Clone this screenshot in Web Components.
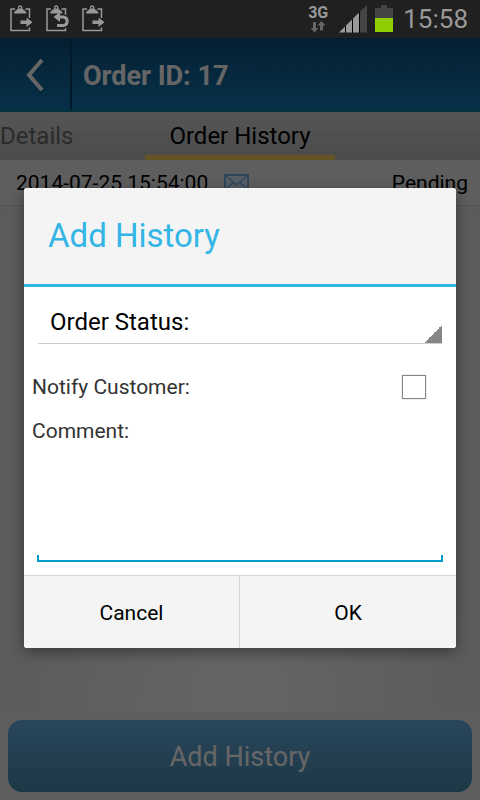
<!DOCTYPE html>
<html lang="en">
<head>
<meta charset="utf-8">
<meta name="viewport" content="width=device-width, initial-scale=1">
<title>Order ID: 17</title>
<style>
  body {
    margin: 0;
    font-family: Roboto, "Liberation Sans", sans-serif;
    color: #000;
    background: #000;
  }
</style>
</head>
<body>
<order-app>
  <status-bar slot="status" time="15:58"></status-bar>
  <action-bar slot="page">Order ID: 17</action-bar>
  <tab-strip slot="page"></tab-strip>
  <history-row slot="page" status="Pending">2014-07-25 15:54:00</history-row>
  <page-footer slot="footer">Add History</page-footer>
  <history-dialog slot="dialog">Add History</history-dialog>
</order-app>

<script>
class BaseElement extends HTMLElement {
  connectedCallback() {
    if (this.shadowRoot) return;
    this.attachShadow({ mode: 'open' });
    this.shadowRoot.innerHTML = this.template();
  }
}

class OrderApp extends BaseElement {
  template() {
    return `
      <style>
        :host {
          display: flex;
          flex-direction: column;
          min-height: 100vh;
        }
        .screen {
          position: relative;
          flex: 1;
          display: flex;
          flex-direction: column;
          background: radial-gradient(ellipse at 50% 90%, #fdfdfd, #e8e8e8 60%, #e2e2e2);
        }
        main { flex: 1; }
        .scrim {
          position: absolute;
          inset: 0;
          display: flex;
          align-items: center;
          padding: 0 24px 2px;
          background: rgba(0, 0, 0, 0.6);
        }
        .scrim ::slotted(*) { flex: 1; }
      </style>
      <slot name="status"></slot>
      <div class="screen">
        <main><slot name="page"></slot></main>
        <slot name="footer"></slot>
        <div class="scrim"><slot name="dialog"></slot></div>
      </div>
    `;
  }
}

class StatusBar extends BaseElement {
  template() {
    // clipboard outline shared by the three notifications
    const board = `
      <path d="M5 4H1V25.500H19.500V22.500M19.500 13V4H15.500" fill="none" stroke="#999" stroke-width="1.500"/>
      <path d="M4 8.500C4 6 6.500 5 8 4V2.500A2.200 2.200 0 0 1 12.400 2.500V4C14 5 16.500 6 16.500 8.500Z" fill="#999"/>
      <circle cx="10.200" cy="2.700" r="1" fill="#202020"/>`;
    const arrow = '<path d="M10.500 15.500H16.500V12.500L22.500 17.200L16.500 22V19H10.500Z" fill="#999"/>';
    const back = `
      <path d="M14 12H17.500A4.500 4.500 0 0 1 17.500 21H11" fill="none" stroke="#202020" stroke-width="5"/>
      <path d="M13 12H17.500A4.300 4.300 0 0 1 17.500 20.500H11" fill="none" stroke="#999" stroke-width="3"/>
      <path d="M7.500 12L14 7V17Z" fill="#999"/>`;
    return `
      <style>
        :host {
          display: flex;
          align-items: center;
          justify-content: space-between;
          height: 38px;
          padding: 0 12px 0 10px;
          background: #202020;
          color: #999;
        }
        .group { display: flex; align-items: center; gap: 12px; }
        .right { gap: 7px; }
        .time { font-size: 26px; line-height: 38px; padding-left: 3px; }
        svg { display: block; }
        .net {
          display: flex;
          flex-direction: column;
          align-items: center;
          margin-right: 3px;
          font-size: 16px;
          line-height: 16px;
          font-weight: 700;
        }
      </style>
      <div class="group">
        <svg width="24" height="28" viewBox="0 0 24 28">${board}${arrow}</svg>
        <svg width="24" height="28" viewBox="0 0 24 28">${board}${back}</svg>
        <svg width="24" height="28" viewBox="0 0 24 28">${board}${arrow}</svg>
      </div>
      <div class="group right">
        <div class="net">
          <span>3G</span>
          <svg width="16" height="12" viewBox="0 0 16 12" fill="#666"><path d="M3 1H6V7H8.500L4.500 11.500L0.500 7H3Z"/><path d="M10 9.500H13V4.500H15.500L11.500 0L7.500 4.500H10Z"/></svg>
        </div>
        <svg width="30" height="28" viewBox="0 0 30 28"><path d="M22 6.500L29 0V27.500H22Z" fill="#444"/><path d="M1 27.500L7 21.500V27.500ZM8 20.500L14 14.500V27.500H8ZM15 13.500L21 7.500V27.500H15Z" fill="#999"/><path d="M7.500 21V28M14.500 14V28M21.500 7V28" stroke="#000"/></svg>
        <svg width="18" height="28" viewBox="0 0 18 28"><path d="M0 3H6V0H12V3H18V13H0Z" fill="#444"/><path d="M0 13H18V27H0Z" fill="#8fce00"/></svg>
        <span class="time">${this.getAttribute('time')}</span>
      </div>
    `;
  }
}

class ActionBar extends BaseElement {
  template() {
    return `
      <style>
        :host {
          display: flex;
          height: 72px;
          border-bottom: 2px solid #0f7d98;
          background:
            repeating-linear-gradient(135deg, rgba(0, 0, 0, 0.06) 0 2px, transparent 2px 6px),
            linear-gradient(#0c4f7e, #147dba);
          color: #fff;
        }
        button {
          display: grid;
          place-items: center;
          width: 72px;
          padding: 2px 0 0;
          border: 0;
          border-right: 2px solid #07406a;
          background: none;
        }
        h1 { margin: 0; padding-left: 11px; font-size: 27px; line-height: 76px; font-weight: 700; }
      </style>
      <button aria-label="Back">
        <svg width="18" height="32" viewBox="0 0 18 32"><path d="M16 1L3 16L16 31" fill="none" stroke="#fff" stroke-width="4"/></svg>
      </button>
      <h1><slot></slot></h1>
    `;
  }
}

class TabStrip extends BaseElement {
  template() {
    return `
      <style>
        :host {
          display: grid;
          grid-template-columns: 1fr auto 1fr;
          height: 48px;
          background: linear-gradient(#d6d6d6, #bababa);
          font-size: 24px;
          line-height: 48px;
        }
        a { color: #6c6c6c; text-decoration: none; }
        a.active {
          box-sizing: border-box;
          height: 48px;
          padding: 0 24px;
          border-bottom: 5px solid #ffd25a;
          color: #000;
        }
      </style>
      <a href="#details">Details</a>
      <a href="#history" class="active">Order History</a>
    `;
  }
}

class HistoryRow extends BaseElement {
  template() {
    return `
      <style>
        :host {
          display: flex;
          align-items: center;
          gap: 16px;
          height: 45px;
          padding: 0 12px 0 16px;
          border-bottom: 1px solid #cfcfcf;
          background: #ebebeb;
          font-size: 21px;
          line-height: 48px;
        }
        .status { margin-left: auto; }
      </style>
      <span><slot></slot></span>
      <svg width="25" height="18" viewBox="0 0 25 18" aria-hidden="true"><path d="M1 1H24V17H1Z" fill="#dcebff" stroke="#78aee0" stroke-width="2"/><path d="M2 2L12.500 11L23 2M2 16L9 8M23 16L16 8" fill="none" stroke="#78aee0" stroke-width="1.500"/></svg>
      <span class="status">${this.getAttribute('status')}</span>
    `;
  }
}

class PageFooter extends BaseElement {
  template() {
    return `
      <style>
        :host { display: block; padding: 8px; background: #ebebeb; }
        button {
          display: block;
          width: 100%;
          height: 72px;
          padding: 2px 0 0;
          border: 0;
          border-radius: 14px;
          background: linear-gradient(#69b0e4, #468caf);
          color: #fff;
          font: inherit;
          font-size: 27px;
        }
      </style>
      <button><slot></slot></button>
    `;
  }
}

class HistoryDialog extends BaseElement {
  template() {
    return `
      <style>
        :host {
          display: block;
          overflow: hidden;
          border-radius: 3px;
          background: #fff;
          box-shadow: 0 4px 14px rgba(0, 0, 0, 0.4);
        }
        h2 {
          margin: 0;
          padding: 0 24px;
          border-bottom: 3px solid #33b5e5;
          background: #f4f4f4;
          color: #33b5e5;
          font-size: 33px;
          line-height: 96px;
          font-weight: 400;
        }
        form { padding: 14px 8px 13px; font-size: 21px; color: #333; }
        select, textarea, button { display: block; box-sizing: border-box; font: inherit; border: 0; }
        select {
          appearance: none;
          width: calc(100% - 12px);
          height: 43px;
          margin: 0 6px;
          padding: 0 30px 0 12px;
          border-bottom: 1px solid #ccc;
          border-radius: 0;
          background: linear-gradient(135deg, transparent 50%, #868686 50%) right bottom / 18px 18px no-repeat;
          color: #000;
          font-size: 24px;
        }
        .notify {
          display: flex;
          align-items: center;
          justify-content: space-between;
          height: 73px;
          padding: 13px 22px 0 0;
          box-sizing: border-box;
        }
        input {
          appearance: none;
          box-sizing: border-box;
          width: 24px;
          height: 24px;
          margin: 0;
          border: 1px solid #868686;
          box-shadow: 0 0 1px #999;
        }
        .comment { display: block; line-height: 28px; }
        textarea {
          width: calc(100% - 10px);
          height: 117px;
          margin: 0 5px;
          padding: 4px 8px;
          resize: none;
          outline: 0;
          background:
            linear-gradient(#0099cc, #0099cc) left bottom / 2px 7px no-repeat,
            linear-gradient(#0099cc, #0099cc) right bottom / 2px 7px no-repeat,
            linear-gradient(#0099cc, #0099cc) left bottom / 100% 2px no-repeat;
        }
        footer {
          display: grid;
          grid-template-columns: 1fr 1fr;
          border-top: 1px solid #d6d6d6;
          background: #f4f4f4;
          font-size: 21px;
        }
        button { height: 72px; padding: 2px 0 0; background: none; color: #000; }
        button:first-child { border-right: 1px solid #d6d6d6; }
      </style>
      <h2><slot></slot></h2>
      <form>
        <select aria-label="Order Status"><option>Order Status:</option></select>
        <div class="notify">
          <label for="notify">Notify Customer:</label>
          <input type="checkbox" id="notify">
        </div>
        <label class="comment" for="comment">Comment:</label>
        <textarea id="comment"></textarea>
      </form>
      <footer>
        <button>Cancel</button>
        <button>OK</button>
      </footer>
    `;
  }
}

customElements.define('order-app', OrderApp);
customElements.define('status-bar', StatusBar);
customElements.define('action-bar', ActionBar);
customElements.define('tab-strip', TabStrip);
customElements.define('history-row', HistoryRow);
customElements.define('page-footer', PageFooter);
customElements.define('history-dialog', HistoryDialog);
</script>
</body>
</html>
